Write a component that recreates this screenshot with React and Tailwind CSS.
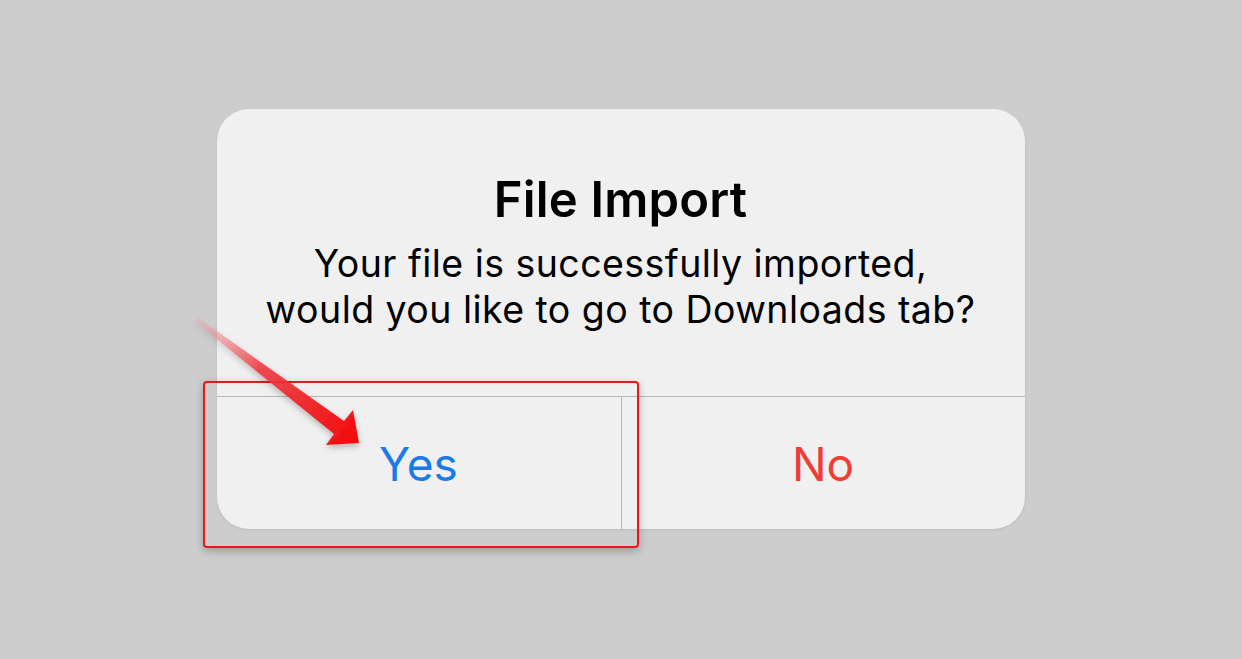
export default function App() {
  return (
    <div className="relative h-[659px] w-[1242px] overflow-hidden bg-[#cdcdcd] font-['Inter',sans-serif]">
      <div className="flex h-full w-full items-start justify-center pt-[109px]">
        <div className="ml-[-1px] flex h-[420px] w-[808px] flex-col overflow-hidden rounded-[32px] bg-[#f0f0f0] shadow-[0_1px_3px_rgba(0,0,0,0.08)]">
          <div className="flex h-[287px] flex-col items-center pt-[64px] text-black">
            <h1 className="text-[49px] font-semibold leading-[54px] tracking-[0.2px]">
              File Import
            </h1>
            <p className="mt-[14px] text-center text-[37.5px] leading-[46px] tracking-[0.45px]">
              Your file is successfully imported,
              <br />
              would you like to go to Downloads tab?
            </p>
          </div>
          <div className="flex flex-1 border-t border-[#b8b8b8]">
            <button className="flex w-[405px] items-center justify-center border-r border-[#b8b8b8] pt-[2px] text-[46px] text-[#1a7be6]">
              Yes
            </button>
            <button className="flex flex-1 items-center justify-center pt-[2px] text-[46px] text-[#ee3f36]">
              No
            </button>
          </div>
        </div>
      </div>

      {/* annotation box */}
      <div className="absolute left-[203px] top-[381px] h-[167px] w-[436px] rounded-[4px] border-2 border-[#e8191c] shadow-[0_3px_8px_rgba(0,0,0,0.25)]" />

      {/* annotation arrow */}
      <svg
        className="absolute left-0 top-0"
        width="1242"
        height="659"
        viewBox="0 0 1242 659"
      >
        <defs>
          <linearGradient id="arrowFill" x1="195" y1="319" x2="358" y2="442" gradientUnits="userSpaceOnUse">
            <stop offset="0" stopColor="#f4a0a4" stopOpacity="0.25" />
            <stop offset="0.4" stopColor="#ee3a44" stopOpacity="0.9" />
            <stop offset="1" stopColor="#f20a0a" />
          </linearGradient>
          <filter id="arrowShadow" x="-20%" y="-20%" width="140%" height="140%">
            <feDropShadow dx="0" dy="3" stdDeviation="3" floodColor="#000" floodOpacity="0.25" />
          </filter>
        </defs>
        <polygon
          points="194,321 334,434 326,445 359,443 353,410 344,421 197,317"
          fill="url(#arrowFill)"
          filter="url(#arrowShadow)"
        />
      </svg>
    </div>
  );
}
